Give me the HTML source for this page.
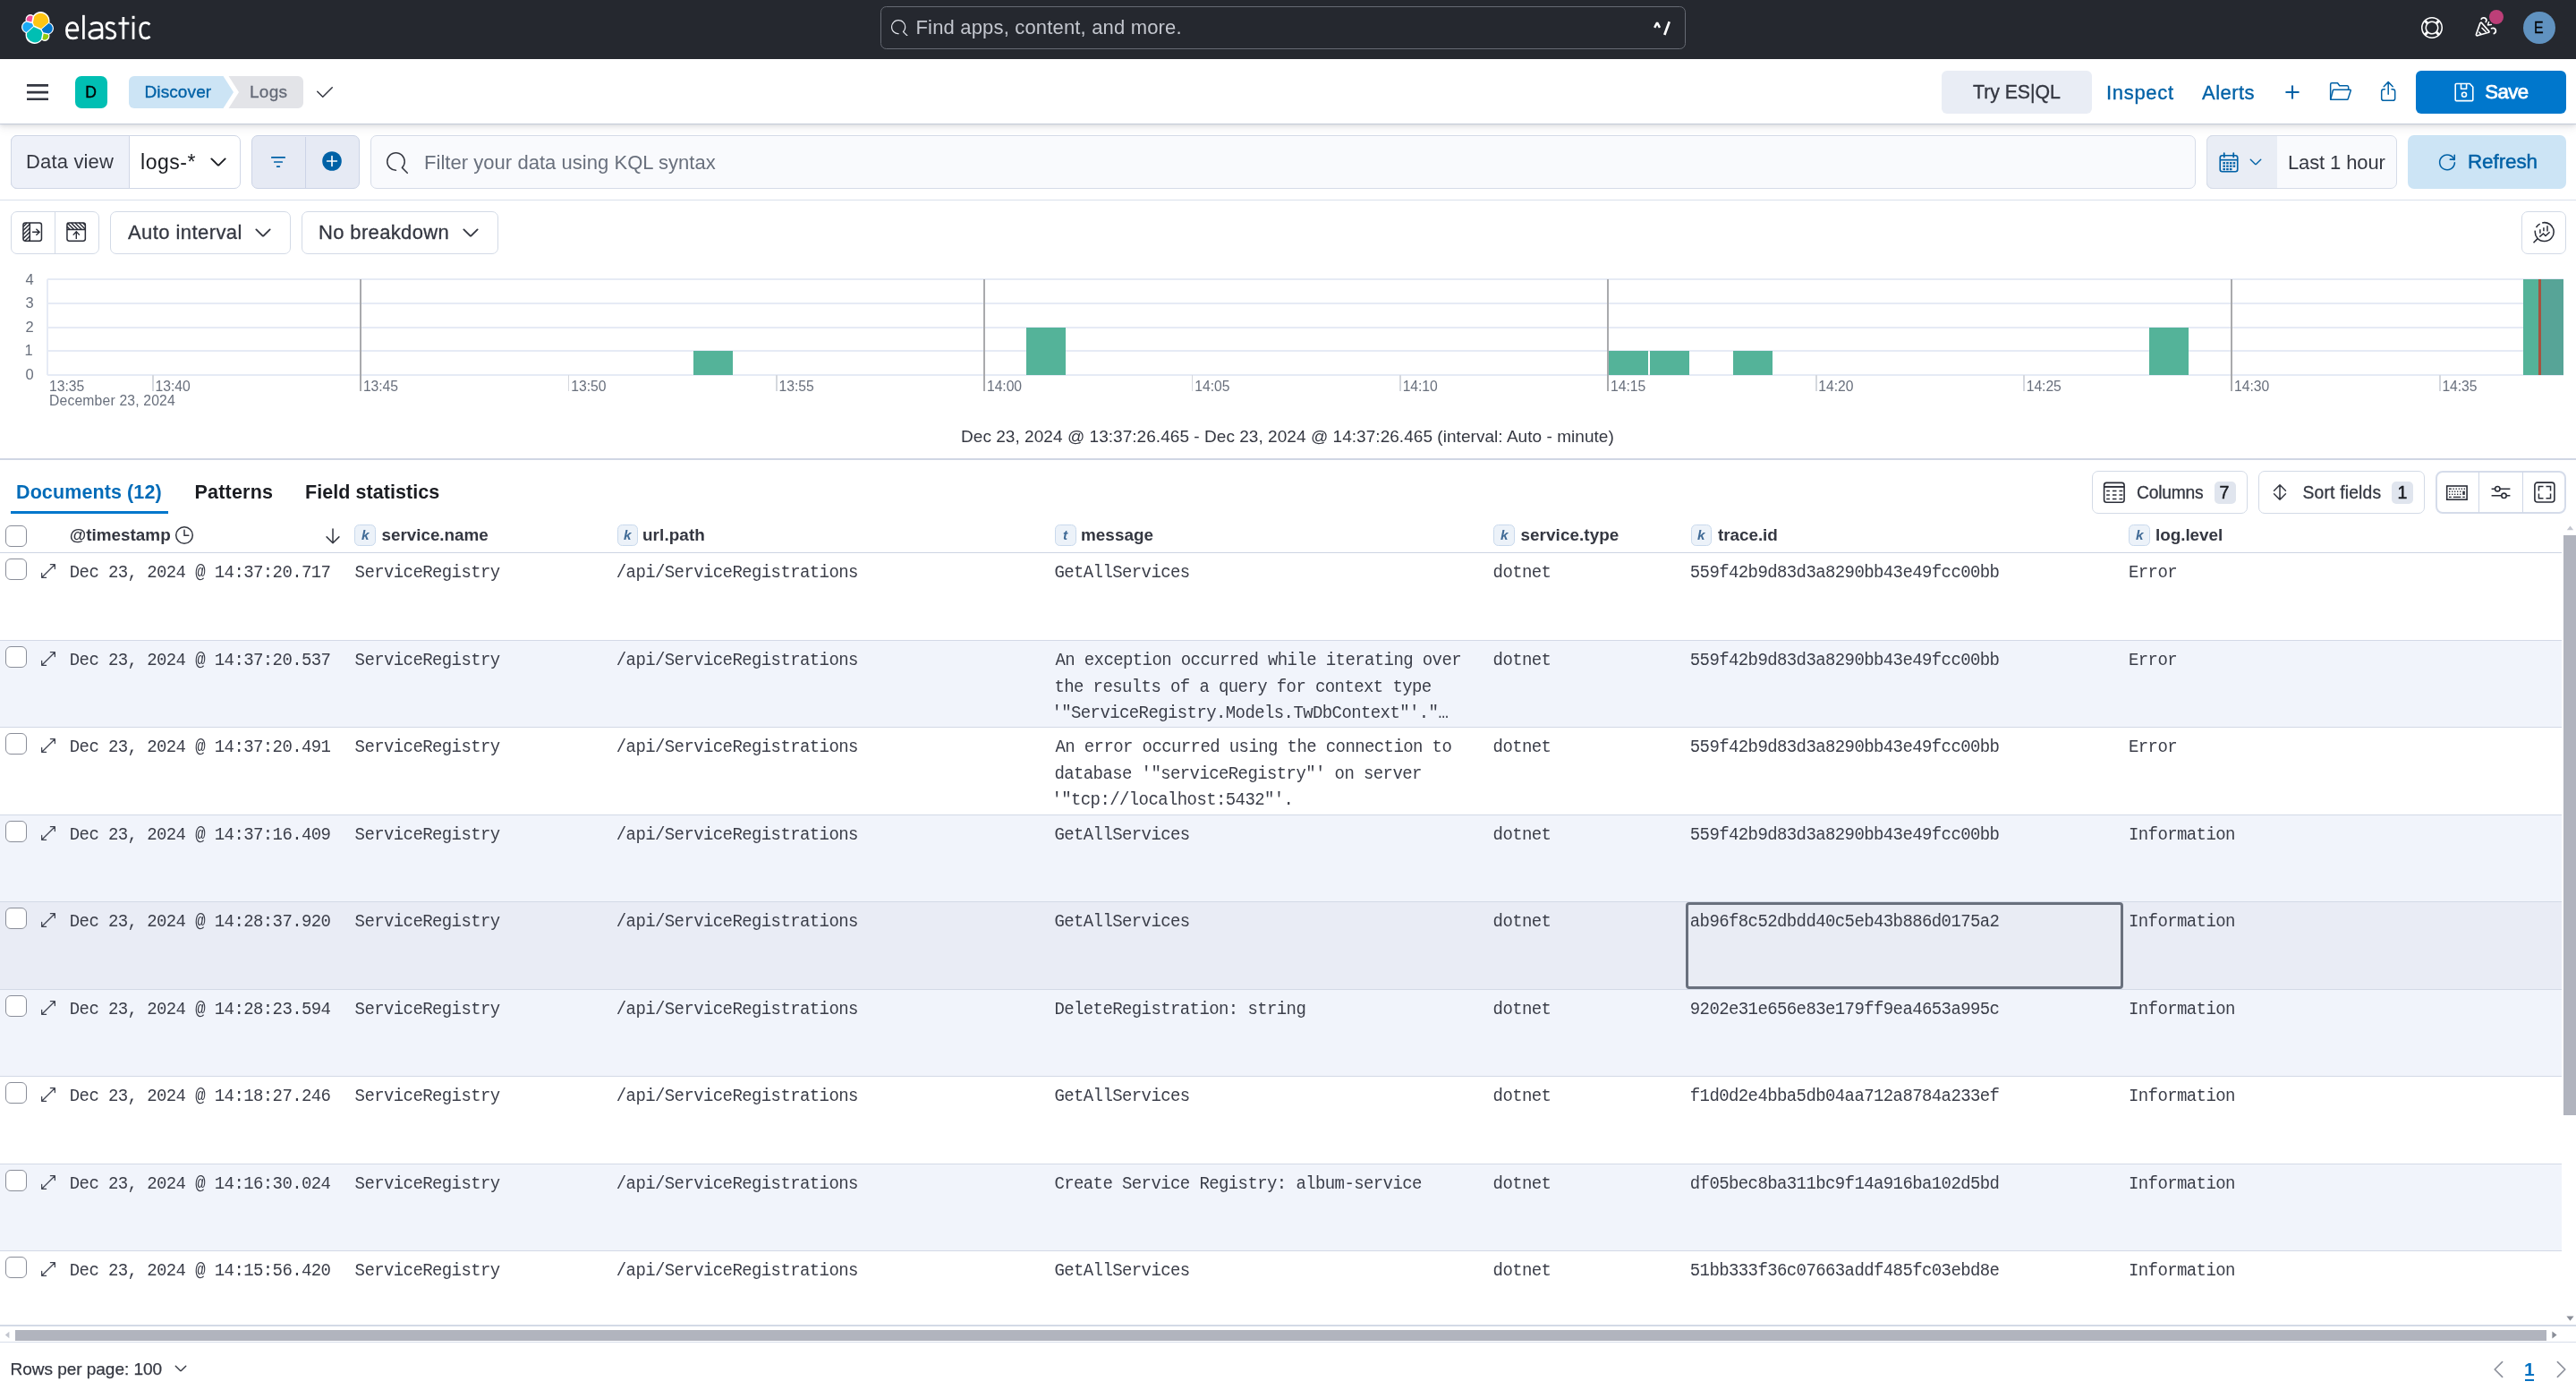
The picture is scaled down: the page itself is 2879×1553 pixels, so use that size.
<!DOCTYPE html>
<html><head><meta charset="utf-8"><title>Discover - Elastic</title>
<style>
html,body{margin:0;padding:0;}
body{width:2879px;height:1553px;overflow:hidden;background:#fff;position:relative;font-family:"Liberation Sans",sans-serif;color:#343741;}
.b{position:absolute;box-sizing:border-box;}
.t{position:absolute;white-space:nowrap;line-height:1;}
</style></head><body><div id="app" style="position:absolute;left:0;top:0;width:2879px;height:1553px;will-change:transform;">
<div class="b" style="left:0px;top:0px;width:2879px;height:66px;background:#25282f;"></div>
<svg class="b" style="left:24px;top:13px;" width="36" height="36" viewBox="0 0 32 32">
<path fill="#FFF" d="M32 16.77a6.334 6.334 0 00-1.14-3.63 6.269 6.269 0 00-3.02-2.3 9.246 9.246 0 00.18-1.78 9.03 9.03 0 00-1.72-5.32A8.97 8.97 0 0021.78.44a8.902 8.902 0 00-5.58-.02 8.846 8.846 0 00-4.5 3.3 4.85 4.85 0 00-5.56-.14A4.93 4.93 0 004 7.64a4.987 4.987 0 00.3 1.72 6.377 6.377 0 00-3.12 2.32A6.276 6.276 0 000 15.31a6.359 6.359 0 001.16 3.66 6.274 6.274 0 003.04 2.32 8.546 8.546 0 00-.18 1.78 8.928 8.928 0 006.22 8.5 8.942 8.942 0 005.54-.02 8.937 8.937 0 004.5-3.28 4.87 4.87 0 005.56.14 4.936 4.936 0 002.12-4.04 4.987 4.987 0 00-.3-1.72 6.377 6.377 0 003.12-2.32A6.224 6.224 0 0032 16.77"/>
<path fill="#FEC514" d="M12.58 13.787l7.002 3.211 7.066-6.213a7.849 7.849 0 00.152-1.557c0-4.287-3.465-7.763-7.738-7.763a7.72 7.72 0 00-6.383 3.393l-1.176 6.121 1.078 2.808z"/>
<path fill="#00BFB3" d="M5.333 21.228A7.964 7.964 0 006.72 27.2a7.89 7.89 0 005.24 3.228 7.78 7.78 0 006.437-1.813 8 8 0 001.175-1.2l1.175-6.109-1.569-3.007-7.025-3.212-6.82 6.141z"/>
<path fill="#F04E98" d="M5.288 9.067l4.802 1.137L11.143 4.727a3.785 3.785 0 00-5.914 1.94 3.81 3.81 0 00.06 2.4"/>
<path fill="#1BA9F5" d="M4.872 10.213a5.328 5.328 0 00-3.534 3.38 5.381 5.381 0 00.71 4.855 5.293 5.293 0 002.99 2.065l6.738-6.101-1.237-2.648-5.667-1.551z"/>
<path fill="#93C90E" d="M20.891 27.273a3.763 3.763 0 005.875-1.936 3.835 3.835 0 00-.06-2.404l-4.773-1.12-1.042 5.46z"/>
<path fill="#07C" d="M21.871 20.586l5.267 1.236a5.361 5.361 0 003.525-3.39 5.408 5.408 0 00-.71-4.864 5.308 5.308 0 00-2.99-2.07l-6.883 6.04 1.791 3.048z"/>
</svg>
<svg class="b" style="left:70px;top:11.1px;" width="99.64" height="41.36" viewBox="0 0 106 44">
<g fill="none" stroke="#fff" stroke-width="2.9" stroke-linecap="butt" stroke-linejoin="round">
<path d="M5 24.4H18C18.1 18.4 15.6 15.3 11.8 15.3C7.6 15.3 4.7 18.8 4.7 24.4C4.7 30.4 7.6 33.9 12.4 33.9C14.6 33.9 16.4 33.4 17.8 32.6"/>
<path d="M24.9 6.2V34.9"/>
<path d="M33.2 17.6C35 16.2 37.4 15.3 40 15.3C44.6 15.3 46.75 17.8 46.75 21.8V34.9M46.75 23.7H41.6C35.6 23.7 31.75 25.4 31.75 29.2C31.75 32.2 34 33.9 37.4 33.9C41.2 33.9 44.8 32 46.75 29.4"/>
<path d="M61.9 17.2C60.3 16 58.5 15.3 56.5 15.3C53.5 15.3 52.1 17.2 52.1 19.6C52.1 25.2 62.6 23.2 62.6 29.2C62.6 32.2 60.4 33.9 57 33.9C54.8 33.9 53 33.3 51.6 32.2"/>
<path d="M72.2 8.6V34.9M66.5 16H79.1"/>
<path d="M84.1 14.6V34.9"/>
<path d="M103.7 17.5C102.3 16.1 100.5 15.3 98.5 15.3C94.6 15.3 92.2 18.8 92.2 24.6C92.2 30.4 94.6 33.9 98.5 33.9C100.5 33.9 102.3 33.1 103.9 31.8"/>
</g>
<rect x="82.55" y="7.2" width="3.1" height="3.5" fill="#fff"/>
</svg>
<div class="b" style="left:984px;top:7px;width:900.2px;height:48.2px;border:1.3px solid #666a73;border-radius:6.5px;"></div>
<svg class="b" style="left:996.3px;top:21.6px;" width="18.6" height="18.6" viewBox="0 0 16 16"><path fill="#e4e7ee" d="M11.271 11.978l3.872 3.873a.502.502 0 00.708 0 .502.502 0 000-.708l-3.565-3.564c2.38-2.747 2.267-6.923-.342-9.532-2.73-2.73-7.17-2.73-9.898 0-2.728 2.729-2.728 7.17 0 9.9a6.955 6.955 0 004.949 2.05.5.5 0 000-1 5.96 5.96 0 01-4.242-1.757 6.01 6.01 0 010-8.486c2.337-2.34 6.143-2.34 8.484 0a6.01 6.01 0 010 8.486.5.5 0 00.034.738z"/></svg>
<span class="t" style="left:1023.50px;top:20.00px;font-size:22px;letter-spacing:0.172px;color:#c3c6ce;">Find apps, content, and more.</span>
<svg class="b" style="left:1844px;top:20px;" width="28" height="24" viewBox="0 0 28 24"><g fill="none" stroke="#fff" stroke-width="2.5"><path d="M5.2 10.9L8.1 5.3L11 10.9" stroke-linejoin="bevel"/><path d="M16.3 19L21.7 4.3" stroke-width="2.7"/></g></svg>
<svg class="b" style="left:2706px;top:19px;" width="24" height="24" viewBox="0 0 16 16"><path fill="#fff" d="M13.6 12.186l-1.357-1.358c-.025-.025-.058-.034-.084-.056.53-.794.84-1.746.84-2.773a4.977 4.977 0 00-.84-2.772c.026-.02.059-.03.084-.056L13.6 3.813a6.96 6.96 0 010 8.373zM8 15A6.956 6.956 0 013.814 13.6l1.358-1.358c.025-.025.034-.057.055-.084C6.02 12.688 6.974 13 8 13a4.978 4.978 0 002.773-.84c.02.026.03.058.056.083l1.357 1.358A6.956 6.956 0 018 15zm-5.601-2.813a6.963 6.963 0 010-8.373l1.359 1.358c.024.025.057.035.084.056A4.97 4.97 0 003 8c0 1.027.31 1.98.842 2.773-.027.022-.06.031-.084.056l-1.36 1.358zm5.6-.187A4 4 0 118 4a4 4 0 010 8zM8 1c1.573 0 3.019.525 4.187 1.4l-1.357 1.358c-.025.025-.035.057-.056.084A4.979 4.979 0 008 3a4.979 4.979 0 00-2.773.842c-.021-.027-.03-.059-.055-.084L3.814 2.4A6.957 6.957 0 018 1zm0-1a8.001 8.001 0 10.003 16.002A8.001 8.001 0 008 0z"/></svg>
<svg class="b" style="left:2764px;top:17px;" width="28" height="28" viewBox="0 0 28 28"><g fill="none" stroke="#fff" stroke-width="1.7" stroke-linecap="round" stroke-linejoin="round">
<path d="M7.9 8.9L3.5 21.3C3.2 22.3 3.9 23 4.9 22.8L17.3 19.3C18 19.1 18.2 18.4 17.7 17.9L9.5 8.5C9 8 8.2 8.1 7.9 8.9Z"/>
<path d="M9.9 14.2L14.2 18.5M6.7 19L8.9 21.1" stroke-width="1.5"/>
<path d="M9.2 4.3C10.2 2.6 12.8 2.3 14.2 3.9C15.2 5 15 6.4 14.2 7.5"/>
<path d="M20.5 14.8C22.4 13.8 24.8 14.6 25.3 16.8C25.6 18.4 24.7 19.8 23.3 20.5"/>
<path d="M17.5 7.8L16.4 10.9L20.4 10.5" stroke-width="1.5"/>
</g></svg>
<div class="b" style="left:2781.8px;top:10.8px;width:16.2px;height:16.2px;border-radius:50%;background:#bd3f78;"></div>
<div class="b" style="left:2819.8px;top:12.8px;width:36.4px;height:36.4px;border-radius:50%;background:#6092c0;"></div>
<span class="t" style="left:2832.40px;top:21.75px;font-size:18.5px;color:#000;-webkit-text-stroke:0.3px #000;transform:scaleX(0.86);transform-origin:0 50%;">E</span>
<div class="b" style="left:0px;top:66px;width:2879px;height:72px;background:#fff;box-shadow:0 1.2px 0 rgba(190,197,214,.75),0 3px 4px rgba(40,44,60,.10),0 7px 9px rgba(40,44,60,.05);z-index:5;"></div>
<div class="b" style="left:0;top:66px;width:2879px;height:80px;z-index:6;">
<svg class="b" style="left:30px;top:28px;" width="24" height="18.4" viewBox="0 0 24 18.4"><path fill="#343741" d="M0 0h24v2.8H0zM0 7.8h24v2.8H0zM0 15.6h24v2.8H0z"/></svg>
<div class="b" style="left:84px;top:19px;width:36px;height:36px;border-radius:7px;background:#00bfb3;"></div>
<span class="t" style="left:95.20px;top:29.05px;font-size:17.5px;color:#000;-webkit-text-stroke:0.4px #000;">D</span>
<svg class="b" style="left:144px;top:19px" width="196" height="36" viewBox="0 0 196 36">
<path d="M6 0 H105.5 L117 18 L105.5 36 H6 A6 6 0 0 1 0 30 V6 A6 6 0 0 1 6 0 Z" fill="#cce4f5"/>
<path d="M111.5 0 H189 A6 6 0 0 1 195 6 V30 A6 6 0 0 1 189 36 H111.5 L123 18 Z" fill="#e3e4e8"/>
</svg>
<span class="t" style="left:161.50px;top:26.90px;font-size:19px;letter-spacing:0.103px;color:#0061a6;-webkit-text-stroke:0.35px #0061a6;">Discover</span>
<span class="t" style="left:279.00px;top:26.90px;font-size:19px;letter-spacing:0.266px;color:#646a77;-webkit-text-stroke:0.3px #646a77;">Logs</span>
<svg class="b" style="left:351px;top:25px;" width="24" height="24" viewBox="0 0 16 16"><path fill="#343741" fill-rule="evenodd" d="M6.5 12a.5.5 0 01-.354-.146l-4-4a.5.5 0 01.708-.708L6.5 10.793l6.646-6.647a.5.5 0 01.708.708l-7 7A.5.5 0 016.5 12"/></svg>
<div class="b" style="left:2170px;top:13px;width:168px;height:48px;background:#e9edf5;border-radius:6px;"></div>
<span class="t" style="left:2205.00px;top:27.05px;font-size:21.3px;letter-spacing:-0.048px;-webkit-text-stroke:0.35px #343741;">Try ES|QL</span>
<span class="t" style="left:2354.00px;top:26.70px;font-size:22px;letter-spacing:0.697px;color:#0061a6;-webkit-text-stroke:0.35px #0061a6;">Inspect</span>
<span class="t" style="left:2461.00px;top:26.70px;font-size:22px;letter-spacing:0.453px;color:#0061a6;-webkit-text-stroke:0.35px #0061a6;">Alerts</span>
<svg class="b" style="left:2549.8px;top:24.799999999999997px;" width="24" height="24" viewBox="0 0 16 16"><path fill="none" stroke="#0061a6" stroke-width="1.4" stroke-linecap="round" d="M8 3.5v9M3.5 8h9"/></svg>
<svg class="b" style="left:2600px;top:22px;" width="30" height="28" viewBox="0 0 30 28"><g fill="none" stroke="#0061a6" stroke-width="1.5" stroke-linejoin="round"><path d="M4.65 23.2V6.2a1.4 1.4 0 011.4-1.4h6.5l2.2 3h8.5a1.4 1.4 0 011.4 1.4v3"/><path d="M4.7 23.3L7.35 13a1 1 0 01.95-.75H26.5a.75.75 0 01.72 1L24.2 22.6a1 1 0 01-.95.7H4.7z"/></g></svg>
<svg class="b" style="left:2655px;top:22px;" width="30" height="28" viewBox="0 0 30 28"><g fill="none" stroke="#0061a6" stroke-width="1.5" stroke-linecap="round" stroke-linejoin="round"><path d="M10.4 11.8H9.1a2.4 2.4 0 00-2.4 2.4v7.7a2.4 2.4 0 002.4 2.4h10.2a2.4 2.4 0 002.4-2.4v-7.7a2.4 2.4 0 00-2.4-2.4H18"/><path d="M14.2 17.3V3.9M9.2 8.7L14.2 3.6L19.2 8.7"/></g></svg>
<div class="b" style="left:2700px;top:13px;width:168px;height:48px;background:#0077cc;border-radius:6px;"></div>
<svg class="b" style="left:2738px;top:22px;" width="30" height="28" viewBox="0 0 30 28"><g fill="none" stroke="#fff" stroke-width="1.6" stroke-linejoin="round"><path d="M6.2 6.7a1.2 1.2 0 011.2-1.2H22.3L25.8 9.3V23.4a1.2 1.2 0 01-1.2 1.2H7.4a1.2 1.2 0 01-1.2-1.2z"/><path d="M12.5 5.6V11.2H18.6V5.6"/><circle cx="16" cy="17.8" r="2.5"/></g></svg>
<span class="t" style="left:2777.30px;top:25.50px;font-size:22.2px;letter-spacing:-0.611px;color:#fff;-webkit-text-stroke:0.75px #fff;">Save</span>
</div>
<div class="b" style="left:0px;top:138px;width:2879px;height:85px;background:#fff;"></div>
<div class="b" style="left:0px;top:223px;width:2879px;height:1.3000000000000114px;background:#d9e0ec;"></div>
<div class="b" style="left:12px;top:151.3px;width:257px;height:59.39999999999998px;background:#fff;border:1.3px solid #d0d7e6;border-radius:7px;"></div>
<div class="b" style="left:12px;top:151.3px;width:133px;height:59.39999999999998px;background:#eef1f9;border:1.3px solid #d0d7e6;border-radius:7px 0 0 7px;"></div>
<span class="t" style="left:29.00px;top:170.00px;font-size:22px;letter-spacing:0.162px;">Data view</span>
<span class="t" style="left:157.00px;top:169.50px;font-size:23px;letter-spacing:0.530px;color:#1a1c21;">logs-*</span>
<svg class="b" style="left:232px;top:169px;" width="24" height="24" viewBox="0 0 16 16"><path fill="none" stroke="#1a1c21" stroke-width="1.25" stroke-linecap="round" stroke-linejoin="round" d="M2.9 5.6L7.6 10.2a.56.56 0 00.8 0L13.1 5.6"/></svg>
<div class="b" style="left:281px;top:151.3px;width:121px;height:59.39999999999998px;background:#e6eaf4;border:1.3px solid #ccd4e6;border-radius:7px;"></div>
<div class="b" style="left:341px;top:152.5px;width:1.3000000000000114px;height:57.0px;background:#ccd4e6;"></div>
<svg class="b" style="left:302px;top:171.5px;" width="18" height="18" viewBox="0 0 16 16"><path fill="none" stroke="#0061a6" stroke-width="1.5" stroke-linecap="round" d="M1.6 3.5H14.4M4.2 8H11.8M6.8 12.5H9.2"/></svg>
<svg class="b" style="left:359.3px;top:168px;" width="24" height="24" viewBox="0 0 16 16"><circle cx="8" cy="8" r="7.2" fill="#0061a6"/><path stroke="#fff" stroke-width="1.1" stroke-linecap="round" d="M8 4.4v7.2M4.4 8h7.2"/></svg>
<div class="b" style="left:414px;top:151.3px;width:2039.6999999999998px;height:59.39999999999998px;background:#f9fafd;border:1.3px solid #d6dce8;border-radius:7px;"></div>
<svg class="b" style="left:432px;top:169.5px;" width="24" height="24" viewBox="0 0 16 16"><path fill="#343741" d="M11.271 11.978l3.872 3.873a.502.502 0 00.708 0 .502.502 0 000-.708l-3.565-3.564c2.38-2.747 2.267-6.923-.342-9.532-2.73-2.73-7.17-2.73-9.898 0-2.728 2.729-2.728 7.17 0 9.9a6.955 6.955 0 004.949 2.05.5.5 0 000-1 5.96 5.96 0 01-4.242-1.757 6.01 6.01 0 010-8.486c2.337-2.34 6.143-2.34 8.484 0a6.01 6.01 0 010 8.486.5.5 0 00.034.738z"/></svg>
<span class="t" style="left:474.00px;top:170.50px;font-size:22px;letter-spacing:0.039px;color:#69707d;">Filter your data using KQL syntax</span>
<div class="b" style="left:2466px;top:151.3px;width:213px;height:59.39999999999998px;background:#f9fafd;border:1.3px solid #d6dce8;border-radius:7px;"></div>
<div class="b" style="left:2466px;top:151.3px;width:79px;height:59.39999999999998px;background:#e9edf5;border:1.3px solid #d6dce8;border-radius:7px 0 0 7px;border-right:none;"></div>
<svg class="b" style="left:2479px;top:169.8px;" width="24" height="24" viewBox="0 0 16 16"><g fill="none" stroke="#0061a6" stroke-width="1.1"><rect x="1.5" y="2.5" width="13" height="12" rx="1.6"/><path d="M1.5 5.8H14.5"/><path d="M4.5 0.8V3.6M11.5 0.8V3.6" stroke-linecap="round" stroke-width="1.2"/></g><g fill="#0061a6"><rect x="3.6" y="7.4" width="1.7" height="1.5"/><rect x="6.1" y="7.4" width="1.7" height="1.5"/><rect x="8.6" y="7.4" width="1.7" height="1.5"/><rect x="11.1" y="7.4" width="1.7" height="1.5"/><rect x="3.6" y="9.7" width="1.7" height="1.5"/><rect x="6.1" y="9.7" width="1.7" height="1.5"/><rect x="8.6" y="9.7" width="1.7" height="1.5"/><rect x="11.1" y="9.7" width="1.7" height="1.5"/><rect x="3.6" y="12" width="1.7" height="1.5"/><rect x="6.1" y="12" width="1.7" height="1.5"/><rect x="8.6" y="12" width="1.7" height="1.5"/></g></svg>
<svg class="b" style="left:2512px;top:172.3px;" width="18" height="18" viewBox="0 0 16 16"><path fill="none" stroke="#0061a6" stroke-width="1.25" stroke-linecap="round" stroke-linejoin="round" d="M2.9 5.6L7.6 10.2a.56.56 0 00.8 0L13.1 5.6"/></svg>
<span class="t" style="left:2557.00px;top:170.50px;font-size:22px;letter-spacing:-0.125px;">Last 1 hour</span>
<div class="b" style="left:2691px;top:151px;width:177px;height:60px;background:#cce4f5;border-radius:7px;"></div>
<svg class="b" style="left:2723px;top:168.5px;" width="24" height="24" viewBox="0 0 16 16"><g fill="none" stroke="#0061a6" stroke-width="1.05" stroke-linecap="round" stroke-linejoin="round"><path d="M13.3 6.4A5.6 5.6 0 1013.6 8.6"/><path d="M10.2 6.1H13.5V2.8"/></g></svg>
<span class="t" style="left:2758.00px;top:169.75px;font-size:22.5px;letter-spacing:-0.128px;color:#0061a6;-webkit-text-stroke:0.45px #0061a6;">Refresh</span>
<div class="b" style="left:12px;top:236px;width:98.5px;height:47.5px;background:#fff;border:1.3px solid #d3dae6;border-radius:7px;"></div>
<div class="b" style="left:61px;top:237px;width:1.2999999999999972px;height:45.5px;background:#d3dae6;"></div>
<svg class="b" style="left:24px;top:247px;" width="24" height="24" viewBox="0 0 24 24"><g fill="none" stroke="#2b2e38" stroke-width="1.5">
<rect x="1.95" y="1.95" width="20.5" height="20.2" rx="2.4"/><path d="M9.3 2V22.1"/>
<path d="M2.00 6.20L6.20 2.00M2.00 10.60L9.30 3.30M2.00 15.10L9.30 7.80M2.00 19.60L9.30 12.30M4.00 22.10L9.30 16.80M8.30 22.10L9.30 21.10" stroke-width="1.45"/>
<path d="M12.1 12.3H19.9M16.4 8.8L20.1 12.3L16.4 15.7" stroke-width="1.4"/></g></svg>
<svg class="b" style="left:73px;top:247px;" width="24" height="24" viewBox="0 0 24 24"><g fill="none" stroke="#2b2e38" stroke-width="1.5">
<rect x="1.95" y="1.95" width="20.4" height="20.2" rx="2.4"/><path d="M2 9.5H22.4"/>
<path d="M2.00 6.20L5.30 9.50M2.15 2.00L9.65 9.50M6.50 2.00L14.00 9.50M10.85 2.00L18.35 9.50M15.20 2.00L22.40 9.20M19.55 2.00L22.40 4.85" stroke-width="1.45"/>
<path d="M12.3 19.9V11.9M8.75 15.6L12.3 11.7L15.85 15.6" stroke-width="1.4"/></g></svg>
<div class="b" style="left:123px;top:236px;width:202px;height:47.5px;background:#fff;border:1.3px solid #d3dae6;border-radius:7px;"></div>
<span class="t" style="left:143.00px;top:248.50px;font-size:22px;letter-spacing:0.425px;-webkit-text-stroke:0.3px #343741;">Auto interval</span>
<svg class="b" style="left:282px;top:248px;" width="24" height="24" viewBox="0 0 16 16"><path fill="none" stroke="#343741" stroke-width="1.25" stroke-linecap="round" stroke-linejoin="round" d="M2.9 5.6L7.6 10.2a.56.56 0 00.8 0L13.1 5.6"/></svg>
<div class="b" style="left:337px;top:236px;width:220px;height:47.5px;background:#fff;border:1.3px solid #d3dae6;border-radius:7px;"></div>
<span class="t" style="left:356.00px;top:248.50px;font-size:22px;letter-spacing:0.352px;-webkit-text-stroke:0.3px #343741;">No breakdown</span>
<svg class="b" style="left:513.5px;top:248px;" width="24" height="24" viewBox="0 0 16 16"><path fill="none" stroke="#343741" stroke-width="1.25" stroke-linecap="round" stroke-linejoin="round" d="M2.9 5.6L7.6 10.2a.56.56 0 00.8 0L13.1 5.6"/></svg>
<div class="b" style="left:2818px;top:236px;width:50px;height:47.5px;background:#fff;border:1.3px solid #d3dae6;border-radius:7px;"></div>
<svg class="b" style="left:2826px;top:245px;" width="32" height="32" viewBox="0 0 32 32"><g fill="none" stroke="#2b2e38" stroke-width="1.55" stroke-linecap="butt" stroke-linejoin="miter">
<path d="M15.2 3.95A10.45 10.45 0 1 1 7.35 12.7"/><path d="M8.5 9.2A10.45 10.45 0 0 1 12.7 5.1"/>
<path d="M10.1 21.6L5.5 26.2"/>
<path d="M12.9 11.2V15.8M16.9 9.2V13.3M21 7.2V13.6" stroke-width="1.5"/>
<path d="M12.3 19.6L16.4 16L19 18.5L23.6 14.2"/></g></svg>
<div class="b" style="left:52.5px;top:311px;width:2812.0px;height:2px;background:#e6ebf5;"></div>
<div class="b" style="left:52.5px;top:338px;width:2812.0px;height:2px;background:#e6ebf5;"></div>
<div class="b" style="left:52.5px;top:365px;width:2812.0px;height:2px;background:#e6ebf5;"></div>
<div class="b" style="left:52.5px;top:391px;width:2812.0px;height:2px;background:#e6ebf5;"></div>
<div class="b" style="left:52.5px;top:418px;width:2812.0px;height:2px;background:#e6ebf5;"></div>
<div class="b" style="left:52px;top:312.4px;width:2px;height:106.40000000000003px;background:#e6ebf5;"></div>
<span class="t" style="left:28.50px;top:303.55px;font-size:16.5px;color:#69707d;">4</span>
<span class="t" style="left:28.50px;top:330.15px;font-size:16.5px;color:#69707d;">3</span>
<span class="t" style="left:28.50px;top:356.75px;font-size:16.5px;color:#69707d;">2</span>
<span class="t" style="left:27.50px;top:383.35px;font-size:16.5px;color:#69707d;">1</span>
<span class="t" style="left:28.50px;top:409.95px;font-size:16.5px;color:#69707d;">0</span>
<div class="b" style="left:170.2px;top:418.8px;width:1.6000000000000227px;height:18.19999999999999px;background:#d5d8de;"></div>
<span class="t" style="left:173.55px;top:423.65px;font-size:15.7px;letter-spacing:-0.033px;color:#69707d;">13:40</span>
<div class="b" style="left:402.3px;top:312.4px;width:2.0px;height:124.60000000000002px;background:#a9aaad;"></div>
<span class="t" style="left:405.90px;top:423.65px;font-size:15.7px;letter-spacing:-0.033px;color:#69707d;">13:45</span>
<div class="b" style="left:634.9px;top:418.8px;width:1.5px;height:18.19999999999999px;background:#d5d8de;"></div>
<span class="t" style="left:638.25px;top:423.65px;font-size:15.7px;letter-spacing:-0.033px;color:#69707d;">13:50</span>
<div class="b" style="left:867.2px;top:418.8px;width:1.599999999999909px;height:18.19999999999999px;background:#d5d8de;"></div>
<span class="t" style="left:870.60px;top:423.65px;font-size:15.7px;letter-spacing:-0.033px;color:#69707d;">13:55</span>
<div class="b" style="left:1099.3px;top:312.4px;width:2.0px;height:124.60000000000002px;background:#a9aaad;"></div>
<span class="t" style="left:1102.95px;top:423.65px;font-size:15.7px;letter-spacing:-0.033px;color:#69707d;">14:00</span>
<div class="b" style="left:1331.9px;top:418.8px;width:1.599999999999909px;height:18.19999999999999px;background:#d5d8de;"></div>
<span class="t" style="left:1335.30px;top:423.65px;font-size:15.7px;letter-spacing:-0.033px;color:#69707d;">14:05</span>
<div class="b" style="left:1564.3px;top:418.8px;width:1.6000000000001364px;height:18.19999999999999px;background:#d5d8de;"></div>
<span class="t" style="left:1567.65px;top:423.65px;font-size:15.7px;letter-spacing:-0.033px;color:#69707d;">14:10</span>
<div class="b" style="left:1796.4px;top:312.4px;width:2.0px;height:124.60000000000002px;background:#a9aaad;"></div>
<span class="t" style="left:1800.00px;top:423.65px;font-size:15.7px;letter-spacing:-0.033px;color:#69707d;">14:15</span>
<div class="b" style="left:2029.0px;top:418.8px;width:1.5px;height:18.19999999999999px;background:#d5d8de;"></div>
<span class="t" style="left:2032.35px;top:423.65px;font-size:15.7px;letter-spacing:-0.033px;color:#69707d;">14:20</span>
<div class="b" style="left:2261.3px;top:418.8px;width:1.599999999999909px;height:18.19999999999999px;background:#d5d8de;"></div>
<span class="t" style="left:2264.70px;top:423.65px;font-size:15.7px;letter-spacing:-0.033px;color:#69707d;">14:25</span>
<div class="b" style="left:2493.4px;top:312.4px;width:2.0px;height:124.60000000000002px;background:#a9aaad;"></div>
<span class="t" style="left:2497.05px;top:423.65px;font-size:15.7px;letter-spacing:-0.033px;color:#69707d;">14:30</span>
<div class="b" style="left:2726.0px;top:418.8px;width:1.599999999999909px;height:18.19999999999999px;background:#d5d8de;"></div>
<span class="t" style="left:2729.40px;top:423.65px;font-size:15.7px;letter-spacing:-0.033px;color:#69707d;">14:35</span>
<span class="t" style="left:55.00px;top:423.65px;font-size:15.7px;letter-spacing:-0.008px;color:#69707d;">13:35</span>
<span class="t" style="left:55.00px;top:439.65px;font-size:15.7px;letter-spacing:0.184px;color:#69707d;">December 23, 2024</span>
<div class="b" style="left:775.4px;top:392.2px;width:43.89999999999998px;height:26.600000000000023px;background:#54b399;"></div>
<div class="b" style="left:1147.1px;top:365.6px;width:44.0px;height:53.19999999999999px;background:#54b399;"></div>
<div class="b" style="left:1797.7px;top:392.2px;width:44.0px;height:26.600000000000023px;background:#54b399;"></div>
<div class="b" style="left:1844.2px;top:392.2px;width:43.899999999999864px;height:26.600000000000023px;background:#54b399;"></div>
<div class="b" style="left:1937.1px;top:392.2px;width:44.0px;height:26.600000000000023px;background:#54b399;"></div>
<div class="b" style="left:2401.8px;top:365.6px;width:44.0px;height:53.19999999999999px;background:#54b399;"></div>
<div class="b" style="left:2820.0px;top:312.4px;width:44.5px;height:106.40000000000003px;background:#54b399;"></div>
<div class="b" style="left:2839.5px;top:312.4px;width:25.0px;height:106.40000000000003px;background:rgba(96,130,150,.30);"></div>
<div class="b" style="left:2837.4px;top:312.4px;width:2.799999999999727px;height:106.40000000000003px;background:#a8523f;"></div>
<span class="t" style="left:1074.00px;top:478.00px;font-size:19px;letter-spacing:0.044px;">Dec 23, 2024 @ 13:37:26.465 - Dec 23, 2024 @ 14:37:26.465 (interval: Auto - minute)</span>
<div class="b" style="left:0px;top:512px;width:2879px;height:2.3999999999999773px;background:#d0d6e4;"></div>
<span class="t" style="left:18.00px;top:539.75px;font-size:21.5px;letter-spacing:0.106px;font-weight:700;color:#006bb8;">Documents (12)</span>
<div class="b" style="left:12px;top:570.8px;width:176px;height:3.2000000000000455px;background:#0077cc;"></div>
<span class="t" style="left:217.50px;top:539.75px;font-size:21.5px;letter-spacing:0.204px;font-weight:700;color:#1a1c21;">Patterns</span>
<span class="t" style="left:341.00px;top:539.75px;font-size:21.5px;letter-spacing:0.060px;font-weight:700;color:#1a1c21;">Field statistics</span>
<div class="b" style="left:2337.6px;top:526.4px;width:174.4000000000001px;height:47.60000000000002px;background:#fff;border:1.3px solid #d3dae6;border-radius:7px;"></div>
<svg class="b" style="left:2350.1px;top:537.2px;" width="25.7" height="25.7" viewBox="0 0 16 16"><g fill="none" stroke="#2b2e38" stroke-width="1"><rect x="1" y="1.5" width="14" height="13.6" rx="1.7"/><path d="M1 4.3H15" stroke-width="1.2"/><path d="M2.6 7.1H4.9M6.8 7.1H9.65M11.5 7.1H13.9M2.6 9.95H4.9M6.8 9.95H9.65M11.5 9.95H13.9M2.6 12.75H4.9M6.8 12.75H9.65M11.5 12.75H13.9" stroke-width="0.95"/></g></svg>
<span class="t" style="left:2388.00px;top:540.95px;font-size:19.3px;letter-spacing:-0.240px;-webkit-text-stroke:0.3px #343741;">Columns</span>
<div class="b" style="left:2475px;top:538px;width:24px;height:24.5px;background:#e0e5ee;border-radius:5px;"></div>
<span class="t" style="left:2480.50px;top:540.95px;font-size:19.5px;color:#1a1c21;-webkit-text-stroke:0.55px #1a1c21;">7</span>
<div class="b" style="left:2524px;top:526.4px;width:185.5px;height:47.60000000000002px;background:#fff;border:1.3px solid #d3dae6;border-radius:7px;"></div>
<svg class="b" style="left:2536px;top:538px;" width="24" height="24" viewBox="0 0 16 16"><g fill="none" stroke="#343741" stroke-width="1" stroke-linecap="round" stroke-linejoin="round"><path d="M8 2.5V13.5M3.7 6.8L8 2.5L12.3 6.8M3.7 9.2L8 13.5L12.3 9.2"/></g></svg>
<span class="t" style="left:2573.50px;top:540.95px;font-size:19.3px;letter-spacing:0.191px;-webkit-text-stroke:0.3px #343741;">Sort fields</span>
<div class="b" style="left:2673px;top:538px;width:24px;height:24.5px;background:#e0e5ee;border-radius:5px;"></div>
<span class="t" style="left:2679.60px;top:540.95px;font-size:19.5px;color:#1a1c21;-webkit-text-stroke:0.55px #1a1c21;">1</span>
<div class="b" style="left:2721.6px;top:526px;width:146.5999999999999px;height:48.200000000000045px;background:#fff;border:2px solid #d5dcea;border-radius:8px;"></div>
<div class="b" style="left:2770.2px;top:527px;width:1.1000000000003638px;height:46.39999999999998px;background:#cfd7e6;"></div>
<div class="b" style="left:2819.2px;top:527px;width:1.1000000000003638px;height:46.39999999999998px;background:#cfd7e6;"></div>
<svg class="b" style="left:2730px;top:538px;" width="32" height="24" viewBox="0 0 32 24"><rect x="4.7" y="5" width="22.4" height="15.2" fill="none" stroke="#2b2e38" stroke-width="1.6"/><g fill="#2b2e38"><rect x="7" y="7.499999999999999" width="2.8" height="1.4"/><rect x="11.40" y="7.50" width="1.4" height="1.4"/><rect x="14.50" y="7.50" width="1.4" height="1.4"/><rect x="17.70" y="7.50" width="1.4" height="1.4"/><rect x="20.60" y="7.50" width="1.4" height="1.4"/><rect x="23.60" y="7.50" width="1.4" height="1.4"/><rect x="7.00" y="10.50" width="1.4" height="1.4"/><rect x="10.10" y="10.50" width="1.4" height="1.4"/><rect x="13.00" y="10.50" width="1.4" height="1.4"/><rect x="16.00" y="10.50" width="1.4" height="1.4"/><rect x="19.10" y="10.50" width="1.4" height="1.4"/><rect x="7.00" y="13.60" width="1.4" height="1.4"/><rect x="10.10" y="13.60" width="1.4" height="1.4"/><rect x="13.00" y="13.60" width="1.4" height="1.4"/><rect x="16.00" y="13.60" width="1.4" height="1.4"/><rect x="19.10" y="13.60" width="1.4" height="1.4"/><rect x="22.3" y="10.6" width="2.5" height="4.3"/><rect x="7" y="16.7" width="2.8" height="1.4"/><rect x="11.7" y="16.7" width="8.7" height="1.4"/><rect x="22.2" y="16.7" width="2.6" height="1.4"/></g></svg>
<svg class="b" style="left:2780px;top:538px;" width="32" height="24" viewBox="0 0 32 24"><g fill="#fff" stroke="#2b2e38" stroke-width="1.6"><path d="M4.6 8.2H25.4M4.6 15.8H25.4"/><circle cx="11.3" cy="8.2" r="2.7"/><circle cx="18.5" cy="15.8" r="2.7"/></g></svg>
<svg class="b" style="left:2828px;top:534px;" width="32" height="32" viewBox="0 0 32 32"><g fill="none" stroke="#2b2e38" stroke-width="1.6"><rect x="4.9" y="5.1" width="22" height="21.85" rx="3"/><path d="M9.45 14.6V9.55H14.5M17.5 9.55H22.55V14.6M22.55 17.6V22.65H17.5M14.5 22.65H9.45V17.6" stroke-width="1.5"/></g></svg>
<div class="b" style="left:6.2px;top:624.3px;width:23.6px;height:23.600000000000023px;background:#fff;border:1.4px solid #8a8e99;border-radius:6px;"></div>
<svg class="b" style="left:42px;top:626.2px;" width="24" height="24" viewBox="0 0 16 16"><g fill="none" stroke="#3f4350" stroke-width="0.85" stroke-linecap="round" stroke-linejoin="round"><path d="M3.3 12.7L12.7 3.3M9.6 3.1H12.9V6.4M6.4 12.9H3.1V9.6"/></g></svg>
<span class="t" style="left:77.80px;top:631.29px;font-size:19px;letter-spacing:-0.602px;color:#3b3e49;font-family:'Liberation Mono',monospace;transform:scaleY(1.05);transform-origin:0 76.7%;">Dec 23, 2024 @ 14:37:20.717</span>
<span class="t" style="left:396.60px;top:631.29px;font-size:19px;letter-spacing:-0.602px;color:#3b3e49;font-family:'Liberation Mono',monospace;transform:scaleY(1.05);transform-origin:0 76.7%;">ServiceRegistry</span>
<span class="t" style="left:688.80px;top:631.29px;font-size:19px;letter-spacing:-0.602px;color:#3b3e49;font-family:'Liberation Mono',monospace;transform:scaleY(1.05);transform-origin:0 76.7%;">/api/ServiceRegistrations</span>
<span class="t" style="left:1178.40px;top:631.29px;font-size:19px;letter-spacing:-0.602px;color:#3b3e49;font-family:'Liberation Mono',monospace;transform:scaleY(1.05);transform-origin:0 76.7%;">GetAllServices</span>
<span class="t" style="left:1668.60px;top:631.29px;font-size:19px;letter-spacing:-0.602px;color:#3b3e49;font-family:'Liberation Mono',monospace;transform:scaleY(1.05);transform-origin:0 76.7%;">dotnet</span>
<span class="t" style="left:1888.80px;top:631.29px;font-size:19px;letter-spacing:-0.602px;color:#3b3e49;font-family:'Liberation Mono',monospace;transform:scaleY(1.05);transform-origin:0 76.7%;">559f42b9d83d3a8290bb43e49fcc00bb</span>
<span class="t" style="left:2379.00px;top:631.29px;font-size:19px;letter-spacing:-0.602px;color:#3b3e49;font-family:'Liberation Mono',monospace;transform:scaleY(1.05);transform-origin:0 76.7%;">Error</span>
<div class="b" style="left:0px;top:716px;width:2863px;height:97px;background:#f1f4fb;"></div>
<div class="b" style="left:0px;top:715px;width:2863px;height:1px;background:#d3d9e6;"></div>
<div class="b" style="left:6.2px;top:722.3px;width:23.6px;height:23.600000000000023px;background:#fff;border:1.4px solid #8a8e99;border-radius:6px;"></div>
<svg class="b" style="left:42px;top:724.2px;" width="24" height="24" viewBox="0 0 16 16"><g fill="none" stroke="#3f4350" stroke-width="0.85" stroke-linecap="round" stroke-linejoin="round"><path d="M3.3 12.7L12.7 3.3M9.6 3.1H12.9V6.4M6.4 12.9H3.1V9.6"/></g></svg>
<span class="t" style="left:77.80px;top:729.29px;font-size:19px;letter-spacing:-0.602px;color:#3b3e49;font-family:'Liberation Mono',monospace;transform:scaleY(1.05);transform-origin:0 76.7%;">Dec 23, 2024 @ 14:37:20.537</span>
<span class="t" style="left:396.60px;top:729.29px;font-size:19px;letter-spacing:-0.602px;color:#3b3e49;font-family:'Liberation Mono',monospace;transform:scaleY(1.05);transform-origin:0 76.7%;">ServiceRegistry</span>
<span class="t" style="left:688.80px;top:729.29px;font-size:19px;letter-spacing:-0.602px;color:#3b3e49;font-family:'Liberation Mono',monospace;transform:scaleY(1.05);transform-origin:0 76.7%;">/api/ServiceRegistrations</span>
<span class="t" style="left:1179.40px;top:729.29px;font-size:19px;letter-spacing:-0.602px;color:#3b3e49;font-family:'Liberation Mono',monospace;transform:scaleY(1.05);transform-origin:0 76.7%;">An exception occurred while iterating over</span>
<span class="t" style="left:1178.40px;top:758.84px;font-size:19px;letter-spacing:-0.602px;color:#3b3e49;font-family:'Liberation Mono',monospace;transform:scaleY(1.05);transform-origin:0 76.7%;">the results of a query for context type</span>
<span class="t" style="left:1175.40px;top:788.39px;font-size:19px;letter-spacing:-0.602px;color:#3b3e49;font-family:'Liberation Mono',monospace;transform:scaleY(1.05);transform-origin:0 76.7%;">&#x27;&quot;ServiceRegistry.Models.TwDbContext&quot;&#x27;.&quot;…</span>
<span class="t" style="left:1668.60px;top:729.29px;font-size:19px;letter-spacing:-0.602px;color:#3b3e49;font-family:'Liberation Mono',monospace;transform:scaleY(1.05);transform-origin:0 76.7%;">dotnet</span>
<span class="t" style="left:1888.80px;top:729.29px;font-size:19px;letter-spacing:-0.602px;color:#3b3e49;font-family:'Liberation Mono',monospace;transform:scaleY(1.05);transform-origin:0 76.7%;">559f42b9d83d3a8290bb43e49fcc00bb</span>
<span class="t" style="left:2379.00px;top:729.29px;font-size:19px;letter-spacing:-0.602px;color:#3b3e49;font-family:'Liberation Mono',monospace;transform:scaleY(1.05);transform-origin:0 76.7%;">Error</span>
<div class="b" style="left:0px;top:812px;width:2863px;height:1px;background:#d3d9e6;"></div>
<div class="b" style="left:6.2px;top:819.3px;width:23.6px;height:23.600000000000023px;background:#fff;border:1.4px solid #8a8e99;border-radius:6px;"></div>
<svg class="b" style="left:42px;top:821.2px;" width="24" height="24" viewBox="0 0 16 16"><g fill="none" stroke="#3f4350" stroke-width="0.85" stroke-linecap="round" stroke-linejoin="round"><path d="M3.3 12.7L12.7 3.3M9.6 3.1H12.9V6.4M6.4 12.9H3.1V9.6"/></g></svg>
<span class="t" style="left:77.80px;top:826.29px;font-size:19px;letter-spacing:-0.602px;color:#3b3e49;font-family:'Liberation Mono',monospace;transform:scaleY(1.05);transform-origin:0 76.7%;">Dec 23, 2024 @ 14:37:20.491</span>
<span class="t" style="left:396.60px;top:826.29px;font-size:19px;letter-spacing:-0.602px;color:#3b3e49;font-family:'Liberation Mono',monospace;transform:scaleY(1.05);transform-origin:0 76.7%;">ServiceRegistry</span>
<span class="t" style="left:688.80px;top:826.29px;font-size:19px;letter-spacing:-0.602px;color:#3b3e49;font-family:'Liberation Mono',monospace;transform:scaleY(1.05);transform-origin:0 76.7%;">/api/ServiceRegistrations</span>
<span class="t" style="left:1179.40px;top:826.29px;font-size:19px;letter-spacing:-0.602px;color:#3b3e49;font-family:'Liberation Mono',monospace;transform:scaleY(1.05);transform-origin:0 76.7%;">An error occurred using the connection to</span>
<span class="t" style="left:1178.40px;top:855.84px;font-size:19px;letter-spacing:-0.602px;color:#3b3e49;font-family:'Liberation Mono',monospace;transform:scaleY(1.05);transform-origin:0 76.7%;">database &#x27;&quot;serviceRegistry&quot;&#x27; on server</span>
<span class="t" style="left:1175.40px;top:885.39px;font-size:19px;letter-spacing:-0.602px;color:#3b3e49;font-family:'Liberation Mono',monospace;transform:scaleY(1.05);transform-origin:0 76.7%;">&#x27;&quot;tcp://localhost:5432&quot;&#x27;.</span>
<span class="t" style="left:1668.60px;top:826.29px;font-size:19px;letter-spacing:-0.602px;color:#3b3e49;font-family:'Liberation Mono',monospace;transform:scaleY(1.05);transform-origin:0 76.7%;">dotnet</span>
<span class="t" style="left:1888.80px;top:826.29px;font-size:19px;letter-spacing:-0.602px;color:#3b3e49;font-family:'Liberation Mono',monospace;transform:scaleY(1.05);transform-origin:0 76.7%;">559f42b9d83d3a8290bb43e49fcc00bb</span>
<span class="t" style="left:2379.00px;top:826.29px;font-size:19px;letter-spacing:-0.602px;color:#3b3e49;font-family:'Liberation Mono',monospace;transform:scaleY(1.05);transform-origin:0 76.7%;">Error</span>
<div class="b" style="left:0px;top:911px;width:2863px;height:97px;background:#f1f4fb;"></div>
<div class="b" style="left:0px;top:910px;width:2863px;height:1px;background:#d3d9e6;"></div>
<div class="b" style="left:6.2px;top:917.3px;width:23.6px;height:23.600000000000023px;background:#fff;border:1.4px solid #8a8e99;border-radius:6px;"></div>
<svg class="b" style="left:42px;top:919.2px;" width="24" height="24" viewBox="0 0 16 16"><g fill="none" stroke="#3f4350" stroke-width="0.85" stroke-linecap="round" stroke-linejoin="round"><path d="M3.3 12.7L12.7 3.3M9.6 3.1H12.9V6.4M6.4 12.9H3.1V9.6"/></g></svg>
<span class="t" style="left:77.80px;top:924.29px;font-size:19px;letter-spacing:-0.602px;color:#3b3e49;font-family:'Liberation Mono',monospace;transform:scaleY(1.05);transform-origin:0 76.7%;">Dec 23, 2024 @ 14:37:16.409</span>
<span class="t" style="left:396.60px;top:924.29px;font-size:19px;letter-spacing:-0.602px;color:#3b3e49;font-family:'Liberation Mono',monospace;transform:scaleY(1.05);transform-origin:0 76.7%;">ServiceRegistry</span>
<span class="t" style="left:688.80px;top:924.29px;font-size:19px;letter-spacing:-0.602px;color:#3b3e49;font-family:'Liberation Mono',monospace;transform:scaleY(1.05);transform-origin:0 76.7%;">/api/ServiceRegistrations</span>
<span class="t" style="left:1178.40px;top:924.29px;font-size:19px;letter-spacing:-0.602px;color:#3b3e49;font-family:'Liberation Mono',monospace;transform:scaleY(1.05);transform-origin:0 76.7%;">GetAllServices</span>
<span class="t" style="left:1668.60px;top:924.29px;font-size:19px;letter-spacing:-0.602px;color:#3b3e49;font-family:'Liberation Mono',monospace;transform:scaleY(1.05);transform-origin:0 76.7%;">dotnet</span>
<span class="t" style="left:1888.80px;top:924.29px;font-size:19px;letter-spacing:-0.602px;color:#3b3e49;font-family:'Liberation Mono',monospace;transform:scaleY(1.05);transform-origin:0 76.7%;">559f42b9d83d3a8290bb43e49fcc00bb</span>
<span class="t" style="left:2379.00px;top:924.29px;font-size:19px;letter-spacing:-0.602px;color:#3b3e49;font-family:'Liberation Mono',monospace;transform:scaleY(1.05);transform-origin:0 76.7%;">Information</span>
<div class="b" style="left:0px;top:1008px;width:2863px;height:98px;background:#e9ecf5;"></div>
<div class="b" style="left:0px;top:1007px;width:2863px;height:1px;background:#d3d9e6;"></div>
<div class="b" style="left:6.2px;top:1014.3px;width:23.6px;height:23.59999999999991px;background:#fff;border:1.4px solid #8a8e99;border-radius:6px;"></div>
<svg class="b" style="left:42px;top:1016.2px;" width="24" height="24" viewBox="0 0 16 16"><g fill="none" stroke="#3f4350" stroke-width="0.85" stroke-linecap="round" stroke-linejoin="round"><path d="M3.3 12.7L12.7 3.3M9.6 3.1H12.9V6.4M6.4 12.9H3.1V9.6"/></g></svg>
<span class="t" style="left:77.80px;top:1021.29px;font-size:19px;letter-spacing:-0.602px;color:#3b3e49;font-family:'Liberation Mono',monospace;transform:scaleY(1.05);transform-origin:0 76.7%;">Dec 23, 2024 @ 14:28:37.920</span>
<span class="t" style="left:396.60px;top:1021.29px;font-size:19px;letter-spacing:-0.602px;color:#3b3e49;font-family:'Liberation Mono',monospace;transform:scaleY(1.05);transform-origin:0 76.7%;">ServiceRegistry</span>
<span class="t" style="left:688.80px;top:1021.29px;font-size:19px;letter-spacing:-0.602px;color:#3b3e49;font-family:'Liberation Mono',monospace;transform:scaleY(1.05);transform-origin:0 76.7%;">/api/ServiceRegistrations</span>
<span class="t" style="left:1178.40px;top:1021.29px;font-size:19px;letter-spacing:-0.602px;color:#3b3e49;font-family:'Liberation Mono',monospace;transform:scaleY(1.05);transform-origin:0 76.7%;">GetAllServices</span>
<span class="t" style="left:1668.60px;top:1021.29px;font-size:19px;letter-spacing:-0.602px;color:#3b3e49;font-family:'Liberation Mono',monospace;transform:scaleY(1.05);transform-origin:0 76.7%;">dotnet</span>
<div class="b" style="left:1883.6px;top:1008.4px;width:489.2000000000003px;height:96.39999999999998px;background:#e9ecf4;border:3px solid #69707d;border-radius:4px;"></div>
<span class="t" style="left:1888.80px;top:1021.29px;font-size:19px;letter-spacing:-0.602px;color:#3b3e49;font-family:'Liberation Mono',monospace;transform:scaleY(1.05);transform-origin:0 76.7%;">ab96f8c52dbdd40c5eb43b886d0175a2</span>
<span class="t" style="left:2379.00px;top:1021.29px;font-size:19px;letter-spacing:-0.602px;color:#3b3e49;font-family:'Liberation Mono',monospace;transform:scaleY(1.05);transform-origin:0 76.7%;">Information</span>
<div class="b" style="left:0px;top:1106px;width:2863px;height:97px;background:#f1f4fb;"></div>
<div class="b" style="left:0px;top:1105px;width:2863px;height:1px;background:#d3d9e6;"></div>
<div class="b" style="left:6.2px;top:1112.3px;width:23.6px;height:23.59999999999991px;background:#fff;border:1.4px solid #8a8e99;border-radius:6px;"></div>
<svg class="b" style="left:42px;top:1114.2px;" width="24" height="24" viewBox="0 0 16 16"><g fill="none" stroke="#3f4350" stroke-width="0.85" stroke-linecap="round" stroke-linejoin="round"><path d="M3.3 12.7L12.7 3.3M9.6 3.1H12.9V6.4M6.4 12.9H3.1V9.6"/></g></svg>
<span class="t" style="left:77.80px;top:1119.29px;font-size:19px;letter-spacing:-0.602px;color:#3b3e49;font-family:'Liberation Mono',monospace;transform:scaleY(1.05);transform-origin:0 76.7%;">Dec 23, 2024 @ 14:28:23.594</span>
<span class="t" style="left:396.60px;top:1119.29px;font-size:19px;letter-spacing:-0.602px;color:#3b3e49;font-family:'Liberation Mono',monospace;transform:scaleY(1.05);transform-origin:0 76.7%;">ServiceRegistry</span>
<span class="t" style="left:688.80px;top:1119.29px;font-size:19px;letter-spacing:-0.602px;color:#3b3e49;font-family:'Liberation Mono',monospace;transform:scaleY(1.05);transform-origin:0 76.7%;">/api/ServiceRegistrations</span>
<span class="t" style="left:1178.40px;top:1119.29px;font-size:19px;letter-spacing:-0.602px;color:#3b3e49;font-family:'Liberation Mono',monospace;transform:scaleY(1.05);transform-origin:0 76.7%;">DeleteRegistration: string</span>
<span class="t" style="left:1668.60px;top:1119.29px;font-size:19px;letter-spacing:-0.602px;color:#3b3e49;font-family:'Liberation Mono',monospace;transform:scaleY(1.05);transform-origin:0 76.7%;">dotnet</span>
<span class="t" style="left:1888.80px;top:1119.29px;font-size:19px;letter-spacing:-0.602px;color:#3b3e49;font-family:'Liberation Mono',monospace;transform:scaleY(1.05);transform-origin:0 76.7%;">9202e31e656e83e179ff9ea4653a995c</span>
<span class="t" style="left:2379.00px;top:1119.29px;font-size:19px;letter-spacing:-0.602px;color:#3b3e49;font-family:'Liberation Mono',monospace;transform:scaleY(1.05);transform-origin:0 76.7%;">Information</span>
<div class="b" style="left:0px;top:1202px;width:2863px;height:1px;background:#d3d9e6;"></div>
<div class="b" style="left:6.2px;top:1209.3px;width:23.6px;height:23.59999999999991px;background:#fff;border:1.4px solid #8a8e99;border-radius:6px;"></div>
<svg class="b" style="left:42px;top:1211.2px;" width="24" height="24" viewBox="0 0 16 16"><g fill="none" stroke="#3f4350" stroke-width="0.85" stroke-linecap="round" stroke-linejoin="round"><path d="M3.3 12.7L12.7 3.3M9.6 3.1H12.9V6.4M6.4 12.9H3.1V9.6"/></g></svg>
<span class="t" style="left:77.80px;top:1216.29px;font-size:19px;letter-spacing:-0.602px;color:#3b3e49;font-family:'Liberation Mono',monospace;transform:scaleY(1.05);transform-origin:0 76.7%;">Dec 23, 2024 @ 14:18:27.246</span>
<span class="t" style="left:396.60px;top:1216.29px;font-size:19px;letter-spacing:-0.602px;color:#3b3e49;font-family:'Liberation Mono',monospace;transform:scaleY(1.05);transform-origin:0 76.7%;">ServiceRegistry</span>
<span class="t" style="left:688.80px;top:1216.29px;font-size:19px;letter-spacing:-0.602px;color:#3b3e49;font-family:'Liberation Mono',monospace;transform:scaleY(1.05);transform-origin:0 76.7%;">/api/ServiceRegistrations</span>
<span class="t" style="left:1178.40px;top:1216.29px;font-size:19px;letter-spacing:-0.602px;color:#3b3e49;font-family:'Liberation Mono',monospace;transform:scaleY(1.05);transform-origin:0 76.7%;">GetAllServices</span>
<span class="t" style="left:1668.60px;top:1216.29px;font-size:19px;letter-spacing:-0.602px;color:#3b3e49;font-family:'Liberation Mono',monospace;transform:scaleY(1.05);transform-origin:0 76.7%;">dotnet</span>
<span class="t" style="left:1888.80px;top:1216.29px;font-size:19px;letter-spacing:-0.602px;color:#3b3e49;font-family:'Liberation Mono',monospace;transform:scaleY(1.05);transform-origin:0 76.7%;">f1d0d2e4bba5db04aa712a8784a233ef</span>
<span class="t" style="left:2379.00px;top:1216.29px;font-size:19px;letter-spacing:-0.602px;color:#3b3e49;font-family:'Liberation Mono',monospace;transform:scaleY(1.05);transform-origin:0 76.7%;">Information</span>
<div class="b" style="left:0px;top:1301px;width:2863px;height:97px;background:#f1f4fb;"></div>
<div class="b" style="left:0px;top:1300px;width:2863px;height:1px;background:#d3d9e6;"></div>
<div class="b" style="left:6.2px;top:1307.3px;width:23.6px;height:23.59999999999991px;background:#fff;border:1.4px solid #8a8e99;border-radius:6px;"></div>
<svg class="b" style="left:42px;top:1309.2px;" width="24" height="24" viewBox="0 0 16 16"><g fill="none" stroke="#3f4350" stroke-width="0.85" stroke-linecap="round" stroke-linejoin="round"><path d="M3.3 12.7L12.7 3.3M9.6 3.1H12.9V6.4M6.4 12.9H3.1V9.6"/></g></svg>
<span class="t" style="left:77.80px;top:1314.29px;font-size:19px;letter-spacing:-0.602px;color:#3b3e49;font-family:'Liberation Mono',monospace;transform:scaleY(1.05);transform-origin:0 76.7%;">Dec 23, 2024 @ 14:16:30.024</span>
<span class="t" style="left:396.60px;top:1314.29px;font-size:19px;letter-spacing:-0.602px;color:#3b3e49;font-family:'Liberation Mono',monospace;transform:scaleY(1.05);transform-origin:0 76.7%;">ServiceRegistry</span>
<span class="t" style="left:688.80px;top:1314.29px;font-size:19px;letter-spacing:-0.602px;color:#3b3e49;font-family:'Liberation Mono',monospace;transform:scaleY(1.05);transform-origin:0 76.7%;">/api/ServiceRegistrations</span>
<span class="t" style="left:1178.40px;top:1314.29px;font-size:19px;letter-spacing:-0.602px;color:#3b3e49;font-family:'Liberation Mono',monospace;transform:scaleY(1.05);transform-origin:0 76.7%;">Create Service Registry: album-service</span>
<span class="t" style="left:1668.60px;top:1314.29px;font-size:19px;letter-spacing:-0.602px;color:#3b3e49;font-family:'Liberation Mono',monospace;transform:scaleY(1.05);transform-origin:0 76.7%;">dotnet</span>
<span class="t" style="left:1888.80px;top:1314.29px;font-size:19px;letter-spacing:-0.602px;color:#3b3e49;font-family:'Liberation Mono',monospace;transform:scaleY(1.05);transform-origin:0 76.7%;">df05bec8ba311bc9f14a916ba102d5bd</span>
<span class="t" style="left:2379.00px;top:1314.29px;font-size:19px;letter-spacing:-0.602px;color:#3b3e49;font-family:'Liberation Mono',monospace;transform:scaleY(1.05);transform-origin:0 76.7%;">Information</span>
<div class="b" style="left:0px;top:1397px;width:2863px;height:1px;background:#d3d9e6;"></div>
<div class="b" style="left:6.2px;top:1404.3px;width:23.6px;height:23.59999999999991px;background:#fff;border:1.4px solid #8a8e99;border-radius:6px;"></div>
<svg class="b" style="left:42px;top:1406.2px;" width="24" height="24" viewBox="0 0 16 16"><g fill="none" stroke="#3f4350" stroke-width="0.85" stroke-linecap="round" stroke-linejoin="round"><path d="M3.3 12.7L12.7 3.3M9.6 3.1H12.9V6.4M6.4 12.9H3.1V9.6"/></g></svg>
<span class="t" style="left:77.80px;top:1411.29px;font-size:19px;letter-spacing:-0.602px;color:#3b3e49;font-family:'Liberation Mono',monospace;transform:scaleY(1.05);transform-origin:0 76.7%;">Dec 23, 2024 @ 14:15:56.420</span>
<span class="t" style="left:396.60px;top:1411.29px;font-size:19px;letter-spacing:-0.602px;color:#3b3e49;font-family:'Liberation Mono',monospace;transform:scaleY(1.05);transform-origin:0 76.7%;">ServiceRegistry</span>
<span class="t" style="left:688.80px;top:1411.29px;font-size:19px;letter-spacing:-0.602px;color:#3b3e49;font-family:'Liberation Mono',monospace;transform:scaleY(1.05);transform-origin:0 76.7%;">/api/ServiceRegistrations</span>
<span class="t" style="left:1178.40px;top:1411.29px;font-size:19px;letter-spacing:-0.602px;color:#3b3e49;font-family:'Liberation Mono',monospace;transform:scaleY(1.05);transform-origin:0 76.7%;">GetAllServices</span>
<span class="t" style="left:1668.60px;top:1411.29px;font-size:19px;letter-spacing:-0.602px;color:#3b3e49;font-family:'Liberation Mono',monospace;transform:scaleY(1.05);transform-origin:0 76.7%;">dotnet</span>
<span class="t" style="left:1888.80px;top:1411.29px;font-size:19px;letter-spacing:-0.602px;color:#3b3e49;font-family:'Liberation Mono',monospace;transform:scaleY(1.05);transform-origin:0 76.7%;">51bb333f36c07663addf485fc03ebd8e</span>
<span class="t" style="left:2379.00px;top:1411.29px;font-size:19px;letter-spacing:-0.602px;color:#3b3e49;font-family:'Liberation Mono',monospace;transform:scaleY(1.05);transform-origin:0 76.7%;">Information</span>
<div class="b" style="left:6.2px;top:587px;width:23.6px;height:23.600000000000023px;background:#fff;border:1.4px solid #8a8e99;border-radius:6px;"></div>
<span class="t" style="left:77.80px;top:588.85px;font-size:18.9px;font-weight:700;">@timestamp</span>
<svg class="b" style="left:193.8px;top:586.3px;" width="24" height="24" viewBox="0 0 16 16"><g fill="none" stroke="#343741" stroke-width="1" stroke-linecap="round"><circle cx="8" cy="8" r="6.2"/><path d="M8 4.2V8.2H11.2"/></g></svg>
<svg class="b" style="left:359.5px;top:586.5px;" width="24" height="24" viewBox="0 0 16 16"><g fill="none" stroke="#343741" stroke-width="1" stroke-linecap="round" stroke-linejoin="round"><path d="M8 2.6V13M3.4 8.6L8 13.2L12.6 8.6"/></g></svg>
<div class="b" style="left:396.4px;top:586.2px;width:23.5px;height:23.59999999999991px;background:#ecf2f9;border:1.3px solid #c9d9ec;border-radius:5.5px;"></div>
<span class="t" style="left:404.00px;top:589.55px;font-size:15.3px;font-weight:700;font-style:italic;color:#3f6a96;">k</span>
<span class="t" style="left:426.50px;top:588.85px;font-size:18.9px;letter-spacing:-0.038px;font-weight:700;">service.name</span>
<div class="b" style="left:689.5px;top:586.2px;width:23.5px;height:23.59999999999991px;background:#ecf2f9;border:1.3px solid #c9d9ec;border-radius:5.5px;"></div>
<span class="t" style="left:697.10px;top:589.55px;font-size:15.3px;font-weight:700;font-style:italic;color:#3f6a96;">k</span>
<span class="t" style="left:718.00px;top:588.85px;font-size:18.9px;letter-spacing:0.082px;font-weight:700;">url.path</span>
<div class="b" style="left:1179.2px;top:586.2px;width:23.5px;height:23.59999999999991px;background:#ecf2f9;border:1.3px solid #c9d9ec;border-radius:5.5px;"></div>
<span class="t" style="left:1188.00px;top:589.55px;font-size:15.3px;font-weight:700;font-style:italic;color:#3f6a96;">t</span>
<span class="t" style="left:1208.00px;top:588.85px;font-size:18.9px;letter-spacing:0.023px;font-weight:700;">message</span>
<div class="b" style="left:1669.3px;top:586.2px;width:23.5px;height:23.59999999999991px;background:#ecf2f9;border:1.3px solid #c9d9ec;border-radius:5.5px;"></div>
<span class="t" style="left:1676.90px;top:589.55px;font-size:15.3px;font-weight:700;font-style:italic;color:#3f6a96;">k</span>
<span class="t" style="left:1699.50px;top:588.85px;font-size:18.9px;letter-spacing:0.053px;font-weight:700;">service.type</span>
<div class="b" style="left:1889.5px;top:586.2px;width:23.5px;height:23.59999999999991px;background:#ecf2f9;border:1.3px solid #c9d9ec;border-radius:5.5px;"></div>
<span class="t" style="left:1897.10px;top:589.55px;font-size:15.3px;font-weight:700;font-style:italic;color:#3f6a96;">k</span>
<span class="t" style="left:1920.00px;top:588.85px;font-size:18.9px;letter-spacing:-0.051px;font-weight:700;">trace.id</span>
<div class="b" style="left:2379.4px;top:586.2px;width:23.5px;height:23.59999999999991px;background:#ecf2f9;border:1.3px solid #c9d9ec;border-radius:5.5px;"></div>
<span class="t" style="left:2387.00px;top:589.55px;font-size:15.3px;font-weight:700;font-style:italic;color:#3f6a96;">k</span>
<span class="t" style="left:2409.00px;top:588.85px;font-size:18.9px;letter-spacing:-0.043px;font-weight:700;">log.level</span>
<div class="b" style="left:0px;top:617px;width:2863px;height:1px;background:#cdd5e3;"></div>
<div class="b" style="left:0px;top:1480px;width:2879px;height:1.599999999999909px;background:#d3dae6;"></div>
<div class="b" style="left:2863px;top:575px;width:16px;height:905px;background:#fff;"></div>
<div class="b" style="left:2865px;top:597.5px;width:14px;height:648.5px;background:#b1b4be;"></div>
<svg class="b" style="left:2866px;top:586px" width="13" height="8" viewBox="0 0 13 8"><path d="M6.5 1.6L10.2 6.2H2.8z" fill="#c3c6cf"/></svg>
<svg class="b" style="left:2866px;top:1469px" width="13" height="8" viewBox="0 0 13 8"><path d="M6.5 6.8L10.6 1.6H2.4z" fill="#8a8e98"/></svg>
<div class="b" style="left:0px;top:1481.6px;width:2879px;height:17.40000000000009px;background:#fff;"></div>
<div class="b" style="left:16.6px;top:1485.5px;width:2829.4px;height:12.099999999999909px;background:#b1b4be;"></div>
<svg class="b" style="left:4px;top:1485px" width="8" height="13" viewBox="0 0 8 13"><path d="M1.8 6.5L6.4 2.8V10.2z" fill="#c3c6cf"/></svg>
<svg class="b" style="left:2851px;top:1485px" width="8" height="13" viewBox="0 0 8 13"><path d="M6.6 6.5L1.4 2.4V10.6z" fill="#8a8e98"/></svg>
<div class="b" style="left:0px;top:1498.6px;width:2879px;height:1.400000000000091px;background:#d8deea;"></div>
<span class="t" style="left:11.60px;top:1519.70px;font-size:19px;letter-spacing:-0.035px;-webkit-text-stroke:0.25px #343741;">Rows per page: 100</span>
<svg class="b" style="left:193px;top:1520.2px;" width="18" height="18" viewBox="0 0 16 16"><path fill="none" stroke="#343741" stroke-width="1.25" stroke-linecap="round" stroke-linejoin="round" d="M2.9 5.6L7.6 10.2a.56.56 0 00.8 0L13.1 5.6"/></svg>
<svg class="b" style="left:2781px;top:1518px;" width="24" height="24" viewBox="0 0 16 16"><path fill="none" stroke="#8c909b" stroke-width="1.1" stroke-linecap="round" stroke-linejoin="round" d="M10.4 2.4L4.8 8L10.4 13.6"/></svg>
<span class="t" style="left:2821.00px;top:1519.00px;font-size:21px;font-weight:700;color:#0071c2;">1</span>
<div class="b" style="left:2821.6px;top:1541.3px;width:10.800000000000182px;height:1.900000000000091px;background:#0071c2;"></div>
<svg class="b" style="left:2850px;top:1518px;" width="24" height="24" viewBox="0 0 16 16"><path fill="none" stroke="#8c909b" stroke-width="1.1" stroke-linecap="round" stroke-linejoin="round" d="M5.6 2.4L11.2 8L5.6 13.6"/></svg>
</div></body></html>
